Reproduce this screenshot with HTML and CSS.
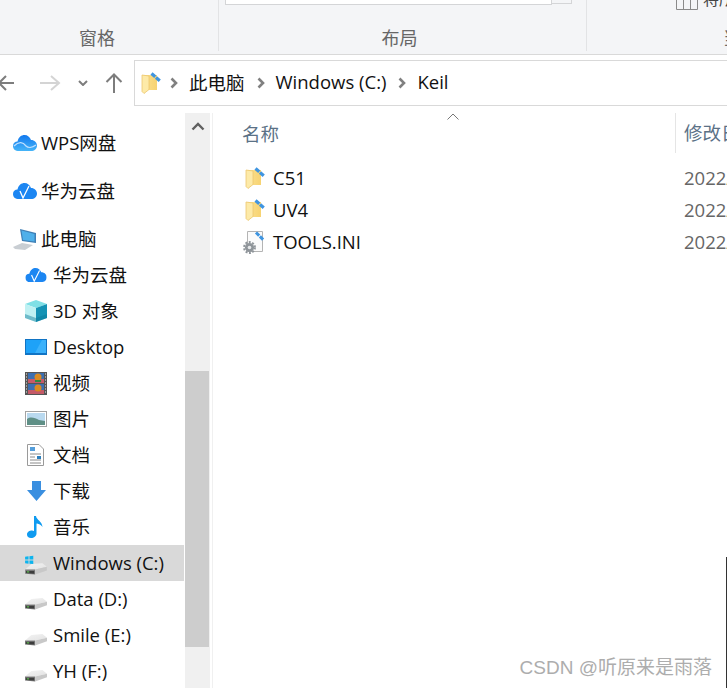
FILE: index.html
```html
<!DOCTYPE html>
<html lang="zh">
<head>
<meta charset="utf-8">
<title>Keil</title>
<link rel="stylesheet" href="styles.css">
</head>
<body>
<svg class="defs" width="0" height="0" aria-hidden="true">
  <defs>
    <linearGradient id="fold" x1="0" x2="1" y1="0" y2="0"><stop offset="0" stop-color="#fbe08f"/><stop offset="1" stop-color="#f7d372"/></linearGradient>
    <linearGradient id="drivetop" x1="0" x2="1" y1="0" y2="1"><stop offset="0" stop-color="#f4f4f4"/><stop offset="1" stop-color="#e2e2e2"/></linearGradient>
    <linearGradient id="wps" x1="0" x2="0" y1="0" y2="1"><stop offset="0" stop-color="#1278ee"/><stop offset="1" stop-color="#45b4f8"/></linearGradient>
    <symbol id="folder" viewBox="0 0 20 22">
      <path d="M2 3 H16 V18 H2Z" fill="url(#fold)"/>
      <path d="M1 3 L8 4 V17.500 L3 21.500 L1 19.500Z" fill="#fdeaa8" stroke="#ecc66e" stroke-width=".8"/>
      <path d="M10.500 1.500 L19 9" fill="none" stroke="#3f95e0" stroke-width="3.200" stroke-dasharray="5 1"/>
    </symbol>
    <symbol id="cloud" viewBox="0 0 24 18">
      <path d="M6 17 C2 17 0 15 0 12 C0 9 2 7.500 4.500 7.500 C5.500 3 8.500 1 11.500 1 C14.500 1 17 3 18 6 C21.500 6 24 8.500 24 11.500 C24 15 21.500 17 18 17Z" fill="#1c86f2"/>
    </symbol>
    <symbol id="drive" viewBox="0 0 24 14">
      <path d="M0 8 L7 2 L19 1 L24 5 L11 8Z" fill="url(#drivetop)"/>
      <path d="M0 8 L11 8 V13.500 L0 12.500Z" fill="#7a7a7a"/>
      <path d="M1 9.500 H10 V12.500 L1 11.800Z" fill="#3c3c3c"/>
      <path d="M2 10 H4.500 V11.300 H2Z" fill="#5dbb4f"/>
      <path d="M11 8 L24 5 V9 L11 13.500Z" fill="#c8c8c8"/>
    </symbol>
  </defs>
</svg>

<header class="ribbon">
  <section class="group group-pane"><span class="group-label">窗格</span></section>
  <section class="group group-layout">
    <div class="layout-box"></div>
    <div class="layout-btn"></div>
    <span class="group-label">布局</span>
  </section>
  <section class="group group-view">
    <div class="view-item">
      <svg class="cols" viewBox="0 0 22 12" width="22" height="12"><path d="M.5 0V11.500H21.500V0M7.500 0V11.500M14.500 0V11.500" fill="none" stroke="#8a8a8a"/></svg>
      <span>将所</span>
    </div>
    <span class="group-label">当前视图</span>
  </section>
</header>

<nav class="address-row">
  <div class="nav-buttons">
    <svg class="nav-back" width="22" height="20" viewBox="0 0 22 20"><path d="M13 3 L6 10 L13 17 M6 10 H21" fill="none" stroke="#7d7d7d" stroke-width="2"/></svg>
    <svg class="nav-forward" width="22" height="20" viewBox="0 0 22 20"><path d="M12 3 L20 10 L12 17 M20 10 H1" fill="none" stroke="#d4d4d4" stroke-width="2"/></svg>
    <svg class="nav-down" width="10" height="6" viewBox="0 0 10 6"><path d="M1 1 L5 5 L9 1" fill="none" stroke="#7d7d7d" stroke-width="2"/></svg>
    <svg class="nav-up" width="18" height="20" viewBox="0 0 18 20"><path d="M1.500 9 L9 1.500 L16.500 9 M9 1.500 V20" fill="none" stroke="#7d7d7d" stroke-width="2"/></svg>
  </div>
  <div class="address-box">
    <svg class="addr-folder" width="20" height="22"><use href="#folder"/></svg>
    <svg class="crumb-sep" width="8" height="12" viewBox="0 0 8 12"><path d="M1.500 1.500 L6 6 L1.500 10.500" fill="none" stroke="#808080" stroke-width="2.600"/></svg>
    <span class="crumb">此电脑</span>
    <svg class="crumb-sep" width="8" height="12" viewBox="0 0 8 12"><path d="M1.500 1.500 L6 6 L1.500 10.500" fill="none" stroke="#808080" stroke-width="2.600"/></svg>
    <span class="crumb">Windows (C:)</span>
    <svg class="crumb-sep" width="8" height="12" viewBox="0 0 8 12"><path d="M1.500 1.500 L6 6 L1.500 10.500" fill="none" stroke="#808080" stroke-width="2.600"/></svg>
    <span class="crumb">Keil</span>
  </div>
</nav>

<main class="main">
  <aside class="sidebar">
    <ul class="tree">
      <li class="row row-top row-gap">
        <svg class="ico" width="24" height="18" viewBox="0 0 24 18"><path d="M6 17 C2 17 0 15 0 12 C0 9 2 7.500 4.500 7.500 C5.500 3 8.500 1 11.500 1 C14.500 1 17 3 18 6 C21.500 6 24 8.500 24 11.500 C24 15 21.500 17 18 17Z" fill="url(#wps)"/><path d="M1 12 C6 7 10 8 13 12 C15 14 19 14 23 11" fill="none" stroke="#bfe0ff" stroke-width="1.300"/></svg>
        <span>WPS网盘</span>
      </li>
      <li class="row row-top row-gap">
        <svg class="ico" width="24" height="18" viewBox="0 0 24 18"><use href="#cloud"/><path d="M7 9 L10 16 L16 4" fill="none" stroke="#fff" stroke-width="1.300"/></svg>
        <span>华为云盘</span>
      </li>
      <li class="row row-top">
        <svg class="ico" width="24" height="22" viewBox="0 0 24 22"><path d="M7 1 L23 5 V15 L9 13Z" fill="#3f7fb5"/><path d="M8.500 2.500 L21.500 6 V13.500 L10 12Z" fill="#4fb0ea"/><path d="M0 19 L9 15 L20 17 L12 22 L2 21Z" fill="#c9ced3"/></svg>
        <span>此电脑</span>
      </li>
      <li class="row">
        <svg class="ico" width="22" height="16" viewBox="0 0 24 18"><use href="#cloud"/><path d="M7 9 L10 16 L16 4" fill="none" stroke="#fff" stroke-width="1.300"/></svg>
        <span>华为云盘</span>
      </li>
      <li class="row">
        <svg class="ico" width="22" height="22" viewBox="0 0 22 22"><path d="M11 0 L22 4 L11 8 L0 4Z" fill="#7fe0e6"/><path d="M0 4 L11 8 V22 L0 18Z" fill="#bff1f3"/><path d="M22 4 L11 8 V22 L22 18Z" fill="#1593b5"/><path d="M0 14 L11 18 L22 14 V18 L11 22 L0 18Z" fill="#0c7a99" opacity=".45"/></svg>
        <span>3D 对象</span>
      </li>
      <li class="row">
        <svg class="ico" width="22" height="16" viewBox="0 0 22 16"><rect width="22" height="16" fill="#1174c4"/><rect x="1" y="1" width="20" height="13" fill="#1ea2f8"/><path d="M10 14 L17 1 H21 V14Z" fill="#3cb2fb"/></svg>
        <span>Desktop</span>
      </li>
      <li class="row">
        <svg class="ico" width="22" height="23" viewBox="0 0 22 23"><rect width="22" height="23" fill="#555"/><rect x="3" y="1" width="16" height="10" fill="#3c6fb0"/><rect x="3" y="12" width="16" height="10" fill="#3c6fb0"/><rect x="3" y="7" width="16" height="4" fill="#c45a68"/><rect x="3" y="18" width="16" height="4" fill="#c45a68"/><circle cx="13" cy="5" r="3.500" fill="#d98a20"/><circle cx="13" cy="16" r="3.500" fill="#d98a20"/><rect x="10" y="8" width="6" height="2" fill="#2d8a3e"/><path d="M1 2H2M1 5H2M1 8H2M1 11H2M1 14H2M1 17H2M1 20H2M20 2H21M20 5H21M20 8H21M20 11H21M20 14H21M20 17H21M20 20H21" stroke="#eee"/></svg>
        <span>视频</span>
      </li>
      <li class="row">
        <svg class="ico" width="22" height="16" viewBox="0 0 22 16"><rect x=".5" y=".5" width="21" height="15" fill="#fff" stroke="#a3a3a3"/><rect x="2" y="2" width="18" height="12" fill="#b9d9ef"/><path d="M2 8 C6 5 10 7 14 9 L20 10 V14 H2Z" fill="#5f8f86"/></svg>
        <span>图片</span>
      </li>
      <li class="row">
        <svg class="ico ico-inset ico-doc" width="17" height="22" viewBox="0 0 17 22"><path d="M.5 .5 H12 L16.500 5 V21.500 H.5Z" fill="#fff" stroke="#9a9a9a"/><path d="M3 4H8M3 6H8" stroke="#1d7fd0" stroke-width="1.500"/><path d="M3 10H14M3 13H8M3 16H14M3 19H14" stroke="#8a8a8a"/><rect x="10" y="12" width="4" height="3" fill="#2c7fbd"/></svg>
        <span>文档</span>
      </li>
      <li class="row">
        <svg class="ico ico-inset ico-down" width="19" height="20" viewBox="0 0 19 20"><path d="M5 0 H14 V9 H19 L9.500 20 L0 9 H5Z" fill="#3a8fe0"/></svg>
        <span>下载</span>
      </li>
      <li class="row">
        <svg class="ico ico-inset ico-music" width="16" height="22" viewBox="0 0 16 22"><path d="M7 0 H9 C9.500 4 15 5 15.500 11 C13.500 8 11 8 9.500 7.500 V17.500 C9.500 20 7 22 4 22 C1.500 22 0 20.500 0 18.500 C0 16 2.500 14.500 5 14.500 C5.800 14.500 6.500 14.700 7 15Z" fill="#0f9bf0"/></svg>
        <span>音乐</span>
      </li>
      <li class="row row-selected">
        <svg class="ico ico-sys" width="22" height="20" viewBox="0 0 24 22"><g transform="translate(0 8)"><use href="#drive" width="24" height="14"/></g><path d="M0 2 L3.800 1.500 V5 H0Z M4.800 1.300 L9 .7 V5 H4.800Z M0 6 H3.800 V9.500 L0 9Z M4.800 6 H9 V10 L4.800 9.500Z" fill="#0db4ee"/></svg>
        <span>Windows (C:)</span>
      </li>
      <li class="row">
        <svg class="ico ico-drive" width="22" height="13" viewBox="0 0 24 14"><use href="#drive"/></svg>
        <span>Data (D:)</span>
      </li>
      <li class="row">
        <svg class="ico ico-drive" width="22" height="13" viewBox="0 0 24 14"><use href="#drive"/></svg>
        <span>Smile (E:)</span>
      </li>
      <li class="row">
        <svg class="ico ico-drive" width="22" height="13" viewBox="0 0 24 14"><use href="#drive"/></svg>
        <span>YH (F:)</span>
      </li>
    </ul>
  </aside>

  <div class="scrollbar">
    <div class="scroll-btn"><svg width="14" height="9" viewBox="0 0 14 9"><path d="M1.500 7.500 L7 2 L12.500 7.500" fill="none" stroke="#606060" stroke-width="2.400"/></svg></div>
    <div class="scroll-track"><div class="scroll-thumb"></div></div>
  </div>

  <section class="files">
    <svg class="sort-caret" width="12" height="7" viewBox="0 0 12 7"><path d="M.5 6.500 L6 1 L11.500 6.500" fill="none" stroke="#777" stroke-width="1"/></svg>
    <div class="file-head">
      <div class="col-name">名称</div>
      <div class="col-date">修改日期</div>
    </div>
    <ul class="file-list">
      <li class="file">
        <div class="file-name"><svg width="20" height="22"><use href="#folder"/></svg><span>C51</span></div>
        <div class="file-date">2022/3/1 10:00</div>
      </li>
      <li class="file">
        <div class="file-name"><svg width="20" height="22"><use href="#folder"/></svg><span>UV4</span></div>
        <div class="file-date">2022/3/1 10:00</div>
      </li>
      <li class="file">
        <div class="file-name">
          <svg class="ini-icon" width="22" height="24" viewBox="0 0 22 24"><path d="M4.500 1.500 H19.500 V21.500 H4.500Z" fill="#fbfbfb" stroke="#b4b4b4"/><path d="M13 2.500 L20.500 10" fill="none" stroke="#3f95e0" stroke-width="3" stroke-dasharray="4.500 1"/><circle cx="6.500" cy="17.500" r="4.600" fill="#8f959a"/><circle cx="6.500" cy="17.500" r="5.500" fill="none" stroke="#8f959a" stroke-width="1.800" stroke-dasharray="2 1.500"/><circle cx="6.500" cy="17.500" r="1.800" fill="#e6e8ea"/></svg>
          <span>TOOLS.INI</span>
        </div>
        <div class="file-date">2022/3/1 10:00</div>
      </li>
    </ul>
  </section>
</main>

<div class="watermark">CSDN @听原来是雨落</div>
<div class="edge-line"></div>
</body>
</html>
```

FILE: styles.css
```css
* { box-sizing: border-box; }
html, body { margin: 0; height: 100%; }
body {
  width: 727px;
  height: 688px;
  overflow: hidden;
  position: relative;
  background: #fff;
  font-family: "Open Sans", "Noto Sans CJK SC", sans-serif;
  font-size: 18.5px;
  color: #111;
}
.defs { position: absolute; }
ul { list-style: none; margin: 0; padding: 0; }

.ribbon {
  display: flex;
  height: 55px;
  background: #f4f5f7;
  border-bottom: 1px solid #d9d9d9;
  color: #666;
}
.group {
  position: relative;
  display: flex;
  justify-content: center;
  align-items: flex-end;
  border-right: 1px solid #e2e3e5;
  margin-bottom: 3px;
}
.group-label { font-size: 18px; line-height: 24px; margin-bottom: 1px; }
.group-pane { width: 219px; padding-right: 24px; }
.group-layout { width: 368px; padding-right: 6px; }
.group-view { flex: 1; border-right: 0; justify-content: flex-start; padding-left: 136px; white-space: nowrap; overflow: hidden; }
.layout-box {
  position: absolute;
  left: 6px;
  top: 0;
  width: 327px;
  height: 5px;
  background: #fff;
  border: 1px solid #d4d5d7;
  border-top: 0;
}
.layout-btn {
  position: absolute;
  left: 332px;
  top: 0;
  width: 21px;
  height: 4px;
  border: 1px solid #d4d5d7;
  border-top: 0;
}
.view-item {
  position: absolute;
  left: 89px;
  top: -13px;
  display: flex;
  align-items: flex-end;
  gap: 5px;
  font-size: 16px;
  line-height: 24px;
  color: #444;
}
.cols { margin-bottom: 1px; }

.address-row {
  display: flex;
  height: 58px;
  padding: 5px 0 7px;
}
.nav-buttons {
  width: 134px;
  display: flex;
  align-items: center;
  margin-left: -7px;
  flex: none;
}
.nav-back { margin-right: 24px; }
.nav-forward { margin-right: 17px; }
.nav-down { margin-right: 17px; }
.address-box {
  flex: 1;
  margin-left: 7px;
  margin-right: -3px;
  display: flex;
  align-items: center;
  border: 1px solid #d9d9d9;
  padding-left: 6px;
  color: #111;
  white-space: nowrap;
}
.addr-folder { margin-right: 9px; }
.crumb-sep { margin-right: 11px; }
.crumb { margin-right: 12px; padding-bottom: 3px; }

.main {
  display: flex;
  height: 575px;
}
.sidebar {
  width: 185px;
  flex: none;
  overflow: hidden;
  padding-top: 12px;
}
.row {
  display: flex;
  align-items: center;
  height: 36px;
  padding-left: 25px;
  white-space: nowrap;
  width: 184px;
}
.row span { padding-bottom: 2px; }
.row-top { padding-left: 13px; }
.row-gap { margin-bottom: 12px; }
.row-selected { background: #d9d9d9; }
.ico { flex: none; margin-right: 6px; }
.row-top .ico { margin-right: 4px; }
.ico-inset { margin-left: 2px; }
.ico-doc { margin-right: 9px; }
.ico-down { margin-right: 7px; }
.ico-music { margin-right: 10px; }
.ico-sys { margin-top: 4px; }
.ico-drive { margin-top: 9px; }

.scrollbar {
  width: 25px;
  flex: none;
  background: #f0f0f0;
  display: flex;
  flex-direction: column;
}
.scroll-btn {
  height: 30px;
  display: flex;
  align-items: center;
  justify-content: center;
  padding-bottom: 3px;
}
.scroll-track { flex: 1; padding-top: 228px; }
.scroll-thumb { height: 276px; width: 24px; background: #cdcdcd; }

.files {
  flex: 1;
  position: relative;
  margin-left: 2px;
  border-left: 1px solid #f0f0f0;
  overflow: hidden;
}
.sort-caret { position: absolute; left: 234px; top: 0; }
.file-head {
  display: flex;
  height: 40px;
  color: #5b7186;
  line-height: 40px;
}
.col-name { width: 462px; padding: 1px 0 0 29px; flex: none; }
.col-date { flex: 1; padding-left: 8px; border-left: 1px solid #e5e5e5; white-space: nowrap; }
.file-list { margin-top: 9px; }
.file {
  display: flex;
  height: 32px;
  align-items: center;
  white-space: nowrap;
}
.file-name {
  width: 463px;
  flex: none;
  display: flex;
  align-items: center;
  gap: 8px;
  padding-left: 32px;
}
.file-name span, .file-date { padding-bottom: 2px; }
.ini-icon { margin-left: -2px; }
.file-date { padding-left: 8px; color: #666; }

.watermark {
  position: absolute;
  right: 15px;
  bottom: 9px;
  font-family: "Liberation Sans", "Noto Sans CJK SC", sans-serif;
  font-size: 19px;
  line-height: 22px;
  color: #adadad;
}
.edge-line {
  position: absolute;
  right: 0;
  top: 557px;
  bottom: 0;
  width: 1px;
  background: #333;
}
```
